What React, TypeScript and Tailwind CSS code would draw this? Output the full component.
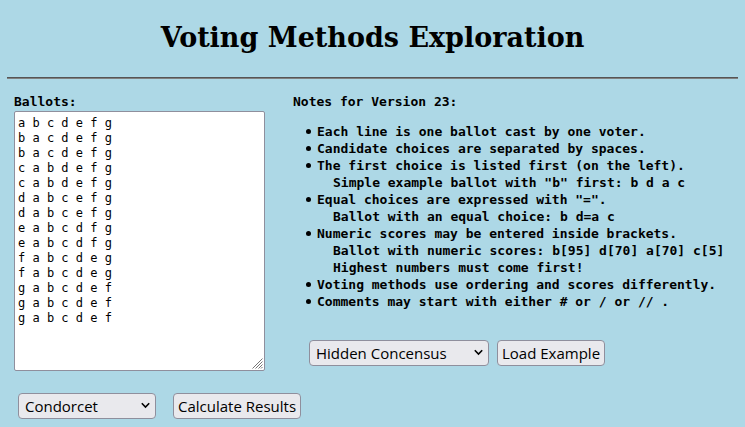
import { useState } from 'react';

const INITIAL_BALLOTS = [
  'a b c d e f g',
  'b a c d e f g',
  'b a c d e f g',
  'c a b d e f g',
  'c a b d e f g',
  'd a b c e f g',
  'd a b c e f g',
  'e a b c d f g',
  'e a b c d f g',
  'f a b c d e g',
  'f a b c d e g',
  'g a b c d e f',
  'g a b c d e f',
  'g a b c d e f',
].join('\n');

const NOTES: { text: string; details?: string[] }[] = [
  { text: 'Each line is one ballot cast by one voter.' },
  { text: 'Candidate choices are separated by spaces.' },
  {
    text: 'The first choice is listed first (on the left).',
    details: ['Simple example ballot with "b" first: b d a c'],
  },
  {
    text: 'Equal choices are expressed with "=".',
    details: ['Ballot with an equal choice: b d=a c'],
  },
  {
    text: 'Numeric scores may be entered inside brackets.',
    details: [
      'Ballot with numeric scores: b[95] d[70] a[70] c[5]',
      'Highest numbers must come first!',
    ],
  },
  { text: 'Voting methods use ordering and scores differently.' },
  { text: 'Comments may start with either # or / or // .' },
];

const CONTROL =
  "h-[26px] rounded border border-[#8f8f9d] bg-[#e9e9ed] text-[15px] leading-6 text-black font-['Open_Sans','Noto_Sans',sans-serif]";

function Dropdown({ label, option, width }: { label: string; option: string; width: string }) {
  return (
    <div className={`relative shrink-0 ${width}`}>
      <select aria-label={label} className={`${CONTROL} block w-full appearance-none pl-[6px] pr-6`}>
        <option>{option}</option>
      </select>
      <svg
        className="pointer-events-none absolute right-[6px] top-[9px]"
        width="9"
        height="7"
        viewBox="0 0 9 7"
        fill="none"
        stroke="#000"
        strokeWidth="1.6"
        aria-hidden="true"
      >
        <path d="M0.8 1.2 L4.5 5 L8.2 1.2" />
      </svg>
    </div>
  );
}

export default function App() {
  const [ballots, setBallots] = useState(INITIAL_BALLOTS);

  return (
    <main className="min-h-screen bg-[#add8e6] px-[7px] pt-4 pb-2 font-['DejaVu_Sans_Mono',monospace] text-[13px] leading-[17px] text-black">
      <h1 className="text-center font-['DejaVu_Serif',serif] text-[27px] leading-[44px] font-bold">
        Voting Methods Exploration
      </h1>
      <hr className="mt-[17px] h-[2px] border-t border-b border-t-[#555555] border-b-[#808080]" />

      <div className="mt-[14px] flex gap-7 pl-[7px]">
        <section className="w-[251px] shrink-0">
          <label htmlFor="ballots" className="block font-bold">
            Ballots:
          </label>
          <div className="relative mt-px">
            <textarea
              id="ballots"
              spellCheck={false}
              value={ballots}
              onChange={(e) => setBallots(e.target.value)}
              className="block h-[260px] w-full resize-none rounded-xs border border-[#8f8f9d] bg-white px-[3px] py-1 text-[12px] leading-[15px]"
            />
            <svg
              className="pointer-events-none absolute right-[2px] bottom-[2px]"
              width="11"
              height="11"
              viewBox="0 0 11 11"
              stroke="#777"
              strokeWidth="1"
              aria-hidden="true"
            >
              <path d="M0.5 10.5 L10.5 0.5 M3.5 10.5 L10.5 3.5 M6.5 10.5 L10.5 6.5 M9 10.5 L10.5 9" />
            </svg>
          </div>
          <div className="mt-[22px] flex gap-[17px] pl-1">
            <Dropdown label="Voting method" option="Condorcet" width="w-[138px]" />
            <button type="button" className={`${CONTROL} px-1 whitespace-nowrap`}>
              Calculate Results
            </button>
          </div>
        </section>

        <section className="min-w-0 flex-1 font-bold">
          <h2>Notes for Version 23:</h2>
          <ul className="mt-[13px] pl-[13px] whitespace-nowrap">
            {NOTES.map((note) => (
              <li key={note.text} className="flex gap-[6px]">
                <span aria-hidden="true" className="mt-[6px] size-[5px] shrink-0 rounded-full bg-black" />
                <div>
                  {note.text}
                  {note.details?.map((detail) => (
                    <p key={detail} className="pl-4">
                      {detail}
                    </p>
                  ))}
                </div>
              </li>
            ))}
          </ul>
          <div className="mt-[30px] flex gap-2 pl-4 font-normal">
            <Dropdown label="Example ballots" option="Hidden Concensus" width="w-[180px]" />
            <button type="button" className={`${CONTROL} px-1 whitespace-nowrap`}>
              Load Example
            </button>
          </div>
        </section>
      </div>
    </main>
  );
}
